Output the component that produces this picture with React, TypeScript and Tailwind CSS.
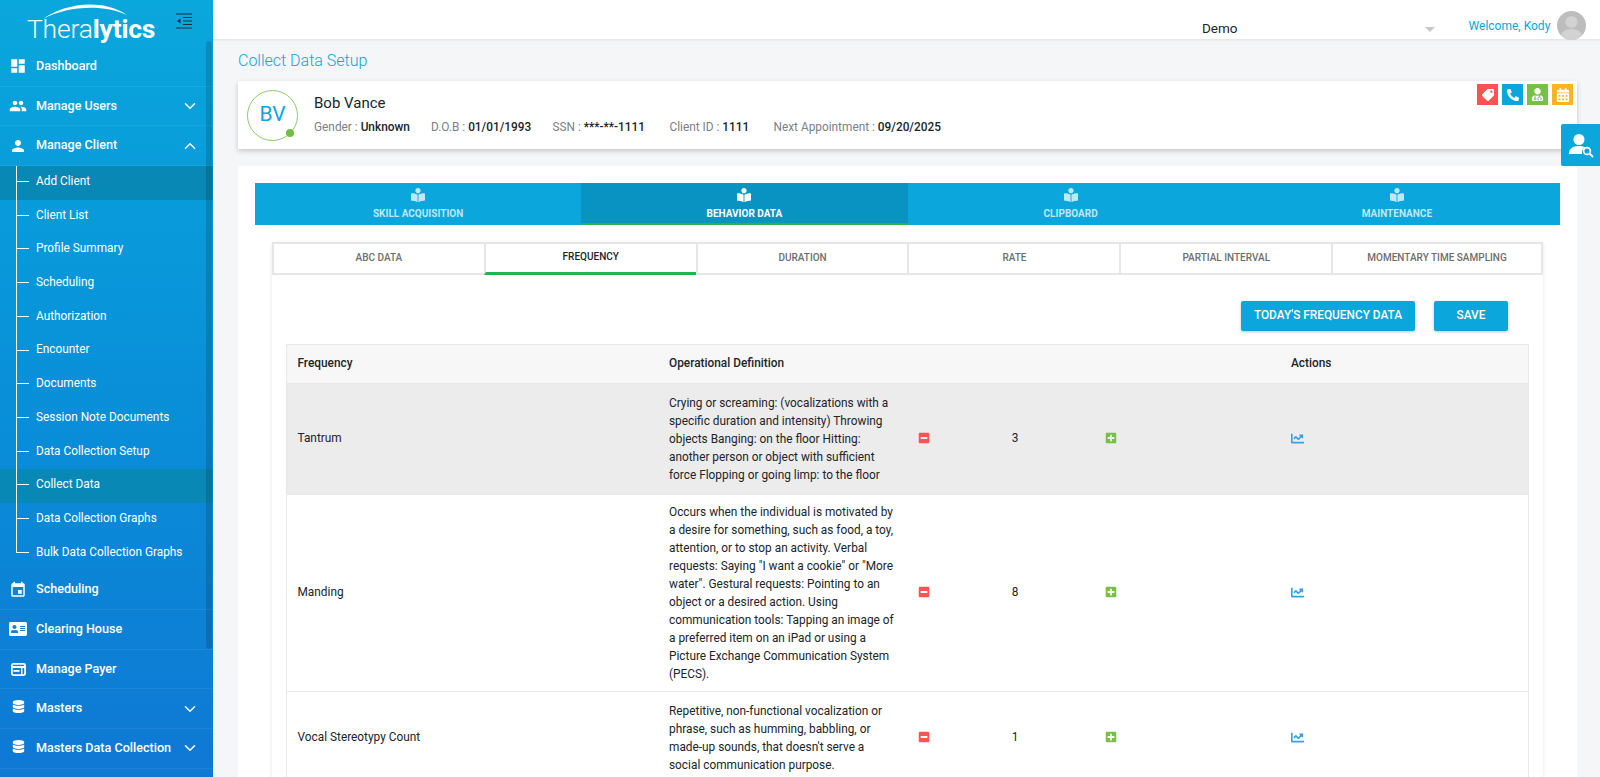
import React from "react";
import { MdDashboard, MdPeople, MdPerson, MdEvent } from "react-icons/md";
import { ChevronDown, ChevronUp } from "lucide-react";
import { FaAddressCard, FaDatabase, FaBookReader, FaTag, FaPhoneAlt, FaUserMd, FaCalendarAlt, FaMinusSquare, FaPlusSquare, FaChartLine } from "react-icons/fa";

const subs = ["Add Client", "Client List", "Profile Summary", "Scheduling", "Authorization", "Encounter", "Documents", "Session Note Documents", "Data Collection Setup", "Collect Data", "Data Collection Graphs", "Bulk Data Collection Graphs"];

function PayerIcon() {
  return (
    <svg width="15" height="13" viewBox="0 0 15 13" fill="none">
      <rect x="0.9" y="0.9" width="13.2" height="11.2" rx="1.5" fill="none" stroke="white" strokeWidth="1.8" />
      <rect x="0.8" y="3" width="13.4" height="2" fill="white" />
      <rect x="2.5" y="7" width="6" height="1.8" fill="white" />
      <rect x="10" y="5" width="1.5" height="7" fill="white" />
    </svg>
  );
}

function NavRow({ icon, label, arrow }: { icon: React.ReactNode; label: string; arrow?: "up" | "down" }) {
  return (
    <div className="h-[39.7px] shrink-0 flex items-center pl-[9px] pr-[14px] border-b border-[#ffffff12] text-white">
      <span className="w-[18px] h-[18px] flex items-center justify-center text-[18px] shrink-0">{icon}</span>
      <span className="ml-[9px] text-[12.6px] font-medium flex-1 whitespace-nowrap">{label}</span>
      {arrow === "down" && <ChevronDown size={18} strokeWidth={2} />}
      {arrow === "up" && <ChevronUp size={18} strokeWidth={2} />}
    </div>
  );
}

function Sidebar() {
  return (
    <aside className="w-[213px] h-full shrink-0 bg-gradient-to-b from-[#0aa7dc] to-[#0f78d4] relative overflow-hidden flex flex-col">
      <div className="h-[47px] shrink-0 relative">
        <div className="absolute left-[27px] top-[14px] text-white text-[26.5px] leading-[30px] tracking-[-0.2px] whitespace-nowrap">
          <span className="font-light">Thera</span><span className="font-bold">lytics</span>
        </div>
        <svg className="absolute left-[40px] top-0" width="92" height="22" viewBox="0 0 92 22">
          <path d="M3 19 C 22 5, 60 -3, 87 15 C 62 4, 28 6, 3 19 Z" fill="white" />
        </svg>
        <svg className="absolute left-[176px] top-[13px]" width="16" height="16" viewBox="0 0 16 16">
          <path d="M0 1h16M7 4.5h9M7 8h9M7 11.5h9M0 15h16" stroke="#1f2d3d" strokeWidth="1.2" />
          <path d="M4.5 5.5v5L1 8z" fill="#1f2d3d" />
        </svg>
      </div>
      <NavRow icon={<MdDashboard />} label="Dashboard" />
      <NavRow icon={<MdPeople className="text-[20px]" />} label="Manage Users" arrow="down" />
      <NavRow icon={<MdPerson className="text-[20px]" />} label="Manage Client" arrow="up" />
      <div className="relative shrink-0">
        {subs.map((s) => (
          <div key={s} className={`h-[33.7px] flex items-center pl-[36px] pb-[2px] text-[11.85px] text-white relative whitespace-nowrap ${s === "Add Client" || s === "Collect Data" ? "bg-[#0788b5]" : ""}`}>
            <span className="absolute left-[16px] top-[15px] w-[13px] h-px bg-white" />
            {s}
          </div>
        ))}
        <span className="absolute left-[16px] top-0 bottom-[18px] w-px bg-white" />
      </div>
      <NavRow icon={<MdEvent />} label="Scheduling" />
      <NavRow icon={<FaAddressCard />} label="Clearing House" />
      <NavRow icon={<PayerIcon />} label="Manage Payer" />
      <NavRow icon={<FaDatabase className="text-[13px] -translate-y-[2px]" />} label="Masters" arrow="down" />
      <NavRow icon={<FaDatabase className="text-[13px] -translate-y-[2px]" />} label="Masters Data Collection" arrow="down" />
      <span className="absolute left-[206px] top-[41px] w-[6px] h-[608px] rounded-full bg-[#00000024]" />
    </aside>
  );
}

function Header() {
  return (
    <header className="h-[40px] shrink-0 bg-white border-b border-[#e6e8ea] shadow-[0_1px_2px_rgba(0,0,0,0.05)] flex items-center pt-[11px] relative">
      <span className="ml-[989px] mt-[7px] text-[13.5px] text-[#212529]">Demo</span>
      <span className="ml-[187px] mt-[9px] w-0 h-0 border-l-[5px] border-r-[5px] border-t-[5px] border-l-transparent border-r-transparent border-t-[#c4c8cc]" />
      <span className="ml-[34px] mt-[2px] text-[12px] text-[#0aa6dc] whitespace-nowrap">Welcome, Kody</span>
      <span className="ml-[7px] w-[29px] h-[29px] rounded-full bg-[#bdbdbd] overflow-hidden flex items-end justify-center relative">
        <svg width="29" height="29" viewBox="0 0 29 29">
          <circle cx="14.5" cy="11" r="6" fill="#d2d2d2" />
          <path d="M3 29c0-8 5-11 11.5-11S26 21 26 29z" fill="#d2d2d2" />
        </svg>
      </span>
    </header>
  );
}

function Info({ k, v, w }: { k: string; v: string; w: string }) {
  return (
    <span className={`whitespace-nowrap ${w}`}>
      <span className="text-[#7c7f85]">{k} : </span>
      <span className="text-[#212529] font-medium">{v}</span>
    </span>
  );
}

function ClientCard() {
  return (
    <div className="mt-[11px] h-[68px] bg-white shadow-[0_2px_5px_rgba(0,0,0,0.2)] flex items-center relative">
      <div className="ml-[9px] w-[51px] h-[51px] rounded-full border border-[#8ccb6a] flex items-center justify-center text-[#0aa6dc] text-[21px] relative">
        BV
        <span className="absolute right-[3px] bottom-[3px] w-[8px] h-[8px] rounded-full bg-[#6fbf44]" />
      </div>
      <div className="ml-[16px] mb-[2px] flex flex-col">
        <div className="text-[15px] text-[#212529] font-normal leading-[20px]">Bob Vance</div>
        <div className="flex text-[11.85px] mt-[5px] leading-[18px]">
          <Info k="Gender" v="Unknown" w="w-[117px]" />
          <Info k="D.O.B" v="01/01/1993" w="w-[121.5px]" />
          <Info k="SSN" v="***-**-1111" w="w-[117px]" />
          <Info k="Client ID" v="1111" w="w-[104px]" />
          <Info k="Next Appointment" v="09/20/2025" w="" />
        </div>
      </div>
      <div className="absolute right-[4px] top-[3px] flex gap-[4px] text-white">
        <span className="w-[21px] h-[21px] bg-[#ff5252] flex items-center justify-center text-[12px]"><FaTag className="rotate-90" /></span>
        <span className="w-[21px] h-[21px] bg-[#0aa6dc] flex items-center justify-center text-[12px]"><FaPhoneAlt /></span>
        <span className="w-[21px] h-[21px] bg-[#76c043] flex items-center justify-center text-[13px]"><FaUserMd /></span>
        <span className="w-[21px] h-[21px] bg-[#ffb322] flex items-center justify-center text-[14px]"><FaCalendarAlt /></span>
      </div>
    </div>
  );
}

const top = ["SKILL ACQUISITION", "BEHAVIOR DATA", "CLIPBOARD", "MAINTENANCE"];
const sub = ["ABC DATA", "FREQUENCY", "DURATION", "RATE", "PARTIAL INTERVAL", "MOMENTARY TIME SAMPLING"];

const rows = [
  { name: "Tantrum", val: "3", h: "h-[111px]", def: "Crying or screaming: (vocalizations with a specific duration and intensity) Throwing objects Banging: on the floor Hitting: another person or object with sufficient force Flopping or going limp: to the floor", bg: "bg-[#ececec]" },
  { name: "Manding", val: "8", h: "h-[197px]", def: "Occurs when the individual is motivated by a desire for something, such as food, a toy, attention, or to stop an activity. Verbal requests: Saying \"I want a cookie\" or \"More water\". Gestural requests: Pointing to an object or a desired action. Using communication tools: Tapping an image of a preferred item on an iPad or using a Picture Exchange Communication System (PECS).", bg: "bg-white" },
  { name: "Vocal Stereotypy Count", val: "1", h: "h-[93px]", def: "Repetitive, non-functional vocalization or phrase, such as humming, babbling, or made-up sounds, that doesn't serve a social communication purpose.", bg: "bg-white" },
];

function DataRow({ r }: { r: (typeof rows)[number] }) {
  return (
    <div className={`${r.h} ${r.bg} border-b border-[#e8e8e8] flex items-center text-[11.85px] text-[#212529] shrink-0`}>
      <div className="w-[382px] pl-[10.5px] shrink-0">{r.name}</div>
      <div className="w-[227px] mr-[8px] leading-[18px] shrink-0">{r.def}</div>
      <div className="w-[38px] pl-[14px] pb-[2px] text-[#ff5252] text-[12px] shrink-0"><FaMinusSquare /></div>
      <div className="w-[146px] text-center shrink-0">{r.val}</div>
      <div className="w-[203px] text-[#76c043] text-[12px] pl-[17px] pb-[2px] shrink-0"><FaPlusSquare /></div>
      <div className="text-[#3a9fe0] text-[13px] pb-[2px] shrink-0"><FaChartLine /></div>
    </div>
  );
}

function Content() {
  return (
    <div className="mt-[17px] flex-1 bg-white rounded-t-[3px] pt-[17px] px-[17px] overflow-hidden">
      <div className="h-[42px] bg-[#0aa6dc] grid grid-cols-4">
        {top.map((t, i) => (
          <div key={t} className={`flex flex-col items-center pt-[5px] ${i === 1 ? "bg-[#0893c3] border-b-2 border-[#27b34a] text-white" : "text-[#bfe8f6]"}`}>
            <FaBookReader className="text-[14px]" />
            <span className="text-[10px] font-bold mt-[6px] leading-[12px]">{t}</span>
          </div>
        ))}
      </div>
      <div className="mx-[17px] mt-[17px] shadow-[0_1px_4px_rgba(0,0,0,0.1)]">
        <div className="h-[33px] grid grid-cols-6">
          {sub.map((t, i) => (
            <div key={t} className={`flex items-center justify-center pb-[3px] text-[10px] font-medium border-t-2 border-l-2 border-b-2 border-[#e6e6e6] last:border-r-2 ${i === 1 ? "text-[#212529] border-b-[3px] border-b-[#27b34a]" : "text-[#6e6e6e]"}`}>{t}</div>
          ))}
        </div>
        <div className="px-[14px] pt-[26px]">
          <div className="flex justify-end gap-[19px] pr-[21px]">
            <button className="h-[30px] w-[174px] rounded-[2px] bg-[#0aa6dc] text-white text-[11.85px] font-medium shadow-[0_1px_3px_rgba(0,0,0,0.25)] whitespace-nowrap">TODAY'S FREQUENCY DATA</button>
            <button className="h-[30px] w-[74px] rounded-[2px] bg-[#0aa6dc] text-white text-[11.85px] font-medium shadow-[0_1px_3px_rgba(0,0,0,0.25)]">SAVE</button>
          </div>
          <div className="mt-[13px] border-l border-r border-t border-[#e8e8e8]">
            <div className="h-[39px] bg-[#f7f7f7] flex items-center text-[11.85px] font-medium text-[#212529] border-b border-[#e8e8e8]">
              <div className="w-[382px] pl-[10.5px]">Frequency</div>
              <div className="w-[622px]">Operational Definition</div>
              <div>Actions</div>
            </div>
            {rows.map((r) => <DataRow key={r.name} r={r} />)}
          </div>
        </div>
      </div>
    </div>
  );
}

export default function App() {
  return (
    <div className="w-[1600px] h-[777px] flex overflow-hidden bg-[#f5f6f8] relative" style={{ fontFamily: "Roboto, sans-serif" }}>
      <Sidebar />
      <div className="flex-1 flex flex-col min-w-0">
        <Header />
        <div className="flex-1 flex flex-col pl-[25px] pr-[23px] min-h-0 overflow-hidden">
          <div className="mt-[11px] text-[16px] font-light text-[#0aa6dc] leading-[19px] h-[19px]">Collect Data Setup</div>
          <ClientCard />
          <Content />
        </div>
      </div>
      <div className="absolute left-[1561px] top-[124px] w-[39px] h-[42px] bg-[#0aa6dc] rounded-l-[2px] flex items-center justify-center">
        <svg width="26" height="26" viewBox="0 0 26 26">
          <circle cx="11" cy="7.5" r="5.5" fill="white" />
          <path d="M1 22c0-5 3-8 10-8 3 0 5 .6 6.5 1.6a6 6 0 0 0-3.5 6.4z" fill="white" />
          <circle cx="19" cy="19" r="3.4" fill="none" stroke="white" strokeWidth="1.6" />
          <path d="M21.5 21.5L25 25" stroke="white" strokeWidth="1.8" />
        </svg>
      </div>
    </div>
  );
}
